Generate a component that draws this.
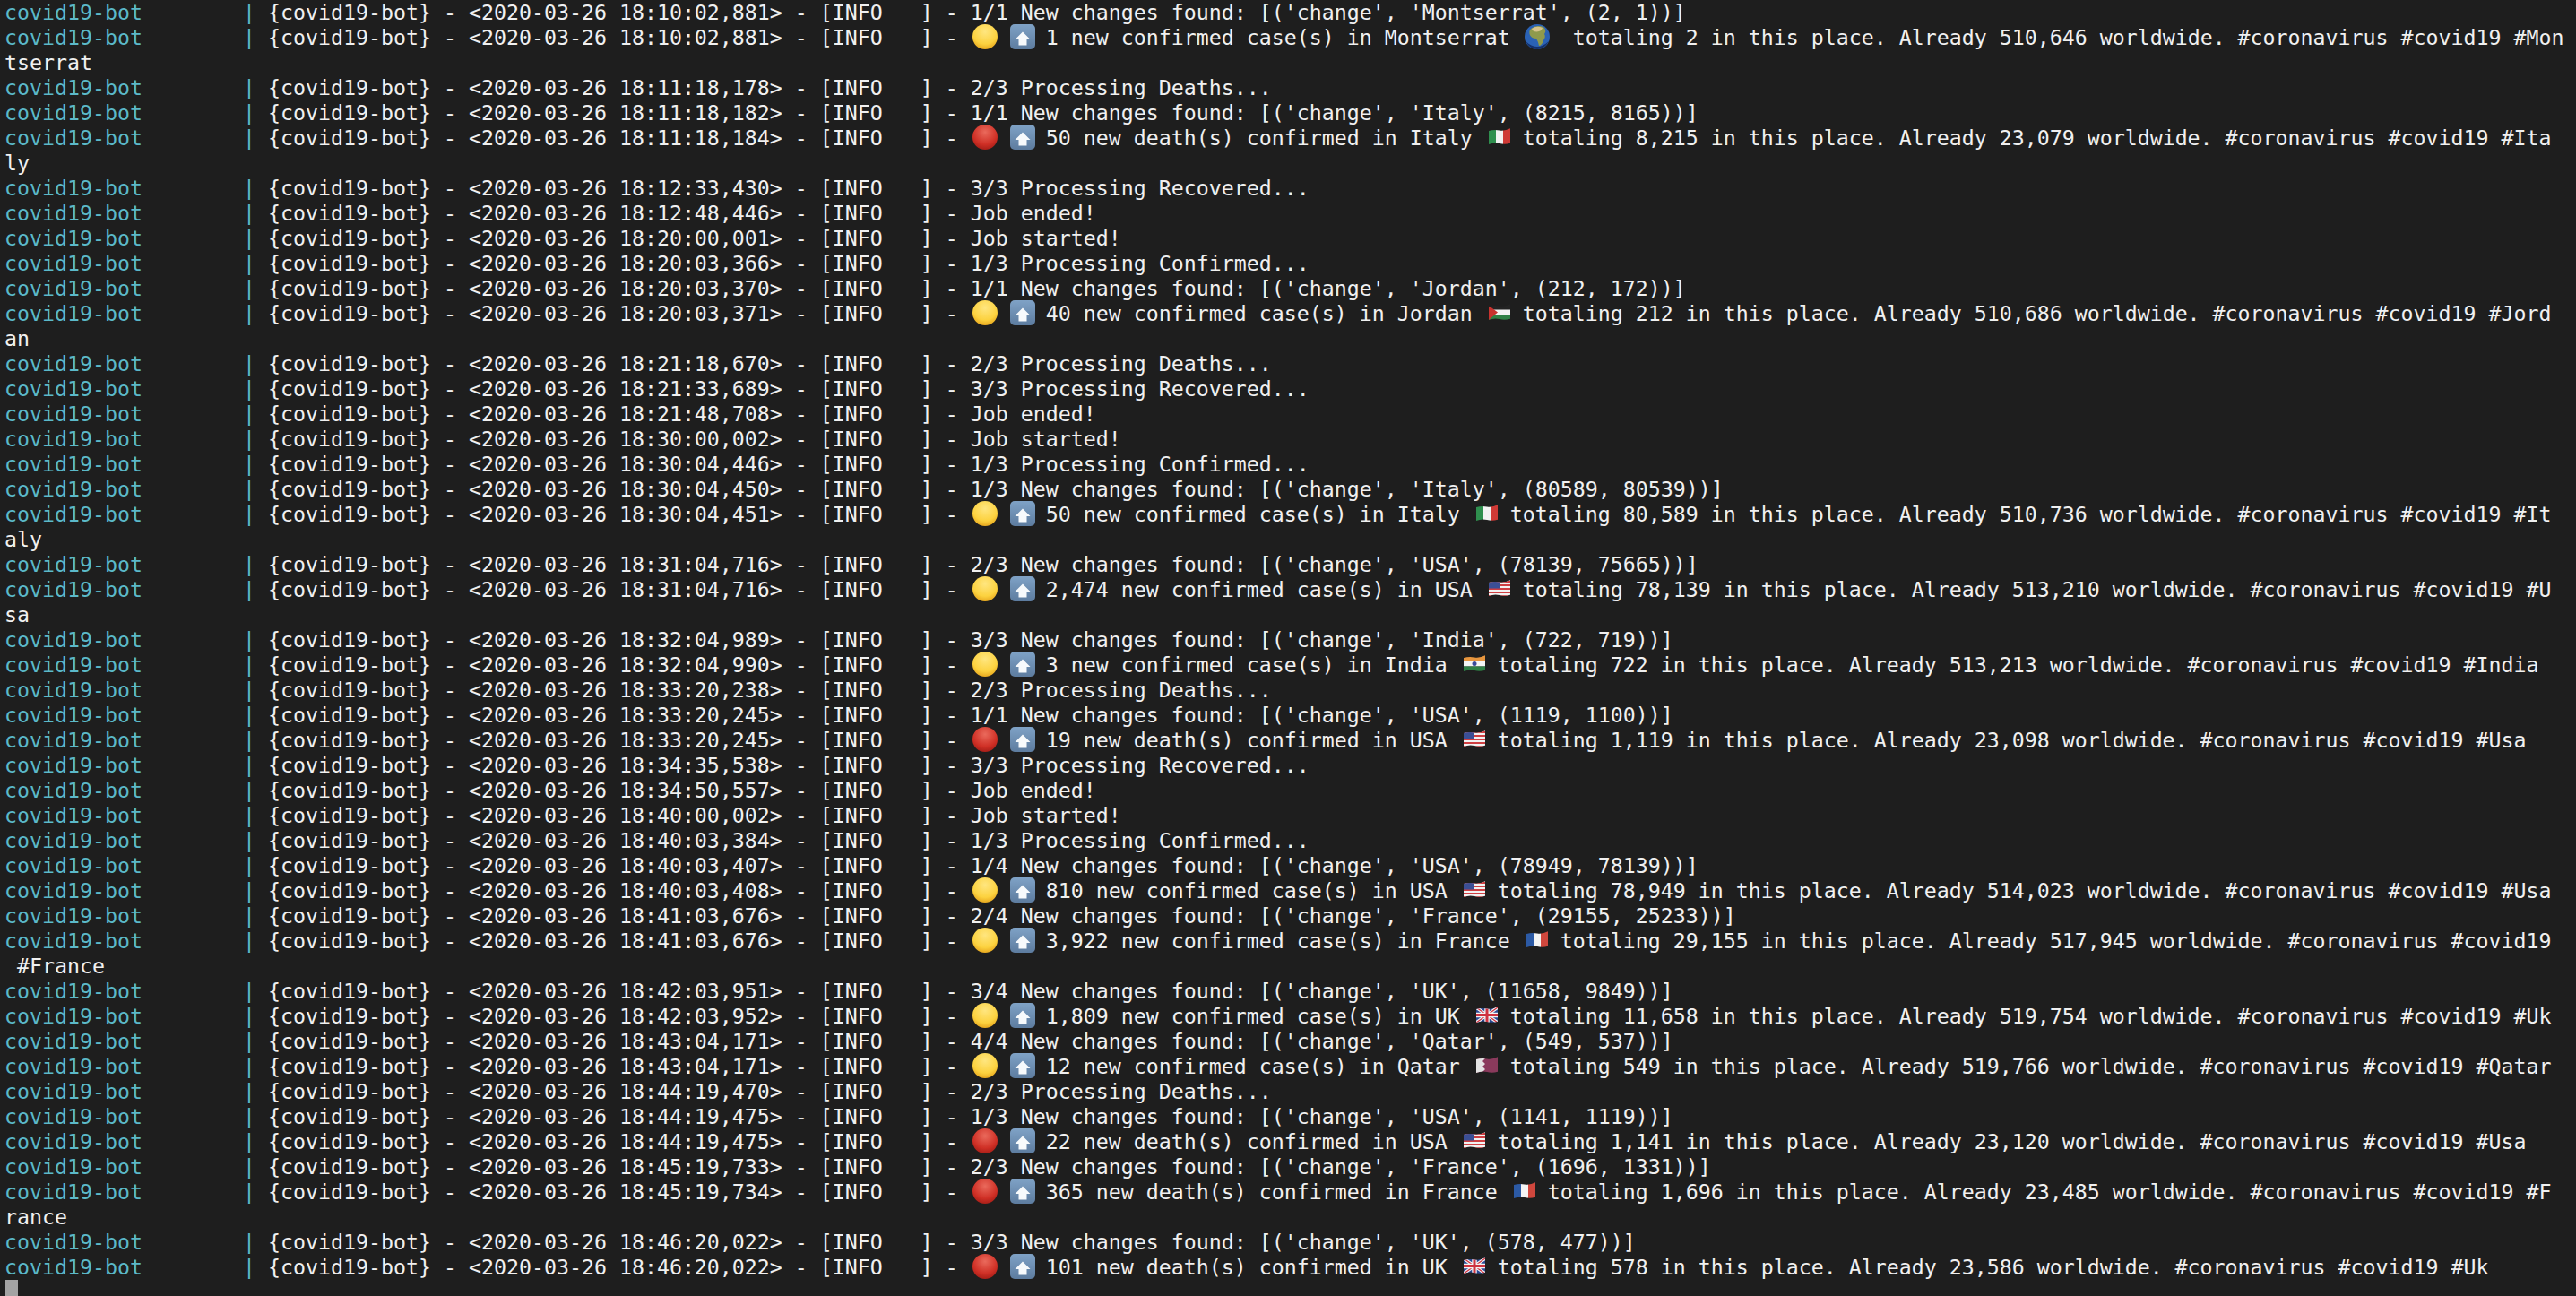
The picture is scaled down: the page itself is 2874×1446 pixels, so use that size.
import { useId } from "react";

const confirmed = (n: string, place: string, flag: string, total: string, world: string, tags: string) =>
  `🟡 ⬆️ ${n} new confirmed case(s) in ${place} ${flag} totaling ${total} in this place. Already ${world} worldwide. #coronavirus #covid19${tags}`;
const deaths = (n: string, place: string, flag: string, total: string, world: string, tags: string) =>
  `🔴 ⬆️ ${n} new death(s) confirmed in ${place} ${flag} totaling ${total} in this place. Already ${world} worldwide. #coronavirus #covid19${tags}`;
const found = (step: string, place: string, a: string) => `${step} New changes found: [('change', '${place}', ${a}]`;

// [time, message], or a plain string for the part of a line the terminal wrapped
const lines: ([string, string] | string)[] = [
  ["18:10:02,881", found("1/1", "Montserrat", "(2, 1))")],
  ["18:10:02,881", confirmed("1", "Montserrat", "🌍 ", "2", "510,646", " #Mon")],
  "tserrat",
  ["18:11:18,178", "2/3 Processing Deaths..."],
  ["18:11:18,182", found("1/1", "Italy", "(8215, 8165))")],
  ["18:11:18,184", deaths("50", "Italy", "🇮🇹", "8,215", "23,079", " #Ita")],
  "ly",
  ["18:12:33,430", "3/3 Processing Recovered..."],
  ["18:12:48,446", "Job ended!"],
  ["18:20:00,001", "Job started!"],
  ["18:20:03,366", "1/3 Processing Confirmed..."],
  ["18:20:03,370", found("1/1", "Jordan", "(212, 172))")],
  ["18:20:03,371", confirmed("40", "Jordan", "🇯🇴", "212", "510,686", " #Jord")],
  "an",
  ["18:21:18,670", "2/3 Processing Deaths..."],
  ["18:21:33,689", "3/3 Processing Recovered..."],
  ["18:21:48,708", "Job ended!"],
  ["18:30:00,002", "Job started!"],
  ["18:30:04,446", "1/3 Processing Confirmed..."],
  ["18:30:04,450", found("1/3", "Italy", "(80589, 80539))")],
  ["18:30:04,451", confirmed("50", "Italy", "🇮🇹", "80,589", "510,736", " #It")],
  "aly",
  ["18:31:04,716", found("2/3", "USA", "(78139, 75665))")],
  ["18:31:04,716", confirmed("2,474", "USA", "🇺🇸", "78,139", "513,210", " #U")],
  "sa",
  ["18:32:04,989", found("3/3", "India", "(722, 719))")],
  ["18:32:04,990", confirmed("3", "India", "🇮🇳", "722", "513,213", " #India")],
  ["18:33:20,238", "2/3 Processing Deaths..."],
  ["18:33:20,245", found("1/1", "USA", "(1119, 1100))")],
  ["18:33:20,245", deaths("19", "USA", "🇺🇸", "1,119", "23,098", " #Usa")],
  ["18:34:35,538", "3/3 Processing Recovered..."],
  ["18:34:50,557", "Job ended!"],
  ["18:40:00,002", "Job started!"],
  ["18:40:03,384", "1/3 Processing Confirmed..."],
  ["18:40:03,407", found("1/4", "USA", "(78949, 78139))")],
  ["18:40:03,408", confirmed("810", "USA", "🇺🇸", "78,949", "514,023", " #Usa")],
  ["18:41:03,676", found("2/4", "France", "(29155, 25233))")],
  ["18:41:03,676", confirmed("3,922", "France", "🇫🇷", "29,155", "517,945", "")],
  " #France",
  ["18:42:03,951", found("3/4", "UK", "(11658, 9849))")],
  ["18:42:03,952", confirmed("1,809", "UK", "🇬🇧", "11,658", "519,754", " #Uk")],
  ["18:43:04,171", found("4/4", "Qatar", "(549, 537))")],
  ["18:43:04,171", confirmed("12", "Qatar", "🇶🇦", "549", "519,766", " #Qatar")],
  ["18:44:19,470", "2/3 Processing Deaths..."],
  ["18:44:19,475", found("1/3", "USA", "(1141, 1119))")],
  ["18:44:19,475", deaths("22", "USA", "🇺🇸", "1,141", "23,120", " #Usa")],
  ["18:45:19,733", found("2/3", "France", "(1696, 1331))")],
  ["18:45:19,734", deaths("365", "France", "🇫🇷", "1,696", "23,485", " #F")],
  "rance",
  ["18:46:20,022", found("3/3", "UK", "(578, 477))")],
  ["18:46:20,022", deaths("101", "UK", "🇬🇧", "578", "23,586", " #Uk")],
];

const emojiPattern = /(🟡|🔴|⬆️|🌍|🇮🇹|🇯🇴|🇺🇸|🇮🇳|🇫🇷|🇬🇧|🇶🇦)/u;

// emoji are a little bigger than their two cells, so the drawings spill over the box
const svgClass = "h-[28px] w-[28px] overflow-visible";

function Ball({ light, mid, dark }: { light: string; mid: string; dark: string }) {
  const id = useId();
  return (
    <svg viewBox="0 0 28 28" className={svgClass}>
      <defs>
        <radialGradient id={id} cx="50%" cy="30%" r="70%">
          <stop offset="0%" stopColor={light} />
          <stop offset="70%" stopColor={mid} />
          <stop offset="100%" stopColor={dark} />
        </radialGradient>
      </defs>
      <circle cx="16" cy="13" r="14" fill={`url(#${id})`} />
    </svg>
  );
}

function UpArrow() {
  const id = useId();
  return (
    <svg viewBox="0 0 28 28" className={svgClass}>
      <defs>
        <linearGradient id={id} x1="0" y1="0" x2="0" y2="1">
          <stop offset="0%" stopColor="#7fa2c6" />
          <stop offset="100%" stopColor="#5d7c9f" />
        </linearGradient>
      </defs>
      <rect x="2" y="-1" width="28" height="28" rx="5" fill={`url(#${id})`} />
      <path d="M16 7.5 L24.5 16 H20.5 V22.5 H11.5 V16 H7.5 Z" fill="#f7fafc" />
    </svg>
  );
}

function Globe() {
  return (
    <svg viewBox="0 0 28 28" className={svgClass}>
      <circle cx="16" cy="13" r="14" fill="#2a62b5" />
      <path d="M9 4 Q15 -1 23 2 Q27 6 24 10 Q26 13 23 17 Q21 23 18 23 Q17 18 15 15 Q9 15 7.5 10 Q7 6 9 4 Z" fill="#8f9a4c" />
      <path d="M10 4 Q15 0 22 3 Q21 7 15.5 7.5 Q11 7.5 10 4 Z" fill="#d8c48c" />
      <path d="M3 18 Q16 30 29 18 Q24 27 16 27 Q8 27 3 18 Z" fill="#14306a" />
    </svg>
  );
}

function Flag({ code }: { code: string }) {
  const id = useId();
  let body = null;
  if (code === "🇮🇹") {
    body = (
      <>
        <rect x="4" y="0" width="8" height="28" fill="#2f8f4e" />
        <rect x="12" y="0" width="8" height="28" fill="#f2f2f2" />
        <rect x="20" y="0" width="8" height="28" fill="#cf3a36" />
      </>
    );
  } else if (code === "🇫🇷") {
    body = (
      <>
        <rect x="4" y="0" width="8" height="28" fill="#2c5aa5" />
        <rect x="12" y="0" width="8" height="28" fill="#f4f4f4" />
        <rect x="20" y="0" width="8" height="28" fill="#d0473d" />
      </>
    );
  } else if (code === "🇯🇴") {
    body = (
      <>
        <rect x="4" y="0" width="24" height="9.5" fill="#222222" />
        <rect x="4" y="9.5" width="24" height="6" fill="#f2f2f2" />
        <rect x="4" y="15.5" width="24" height="8" fill="#2f8045" />
        <path d="M4 5 L14 12.5 L4 21 Z" fill="#c8322e" />
      </>
    );
  } else if (code === "🇮🇳") {
    body = (
      <>
        <rect x="4" y="0" width="24" height="9.5" fill="#e8963e" />
        <rect x="4" y="9.5" width="24" height="6" fill="#f4f4f4" />
        <rect x="4" y="15.5" width="24" height="8" fill="#2f8045" />
        <circle cx="16" cy="12.5" r="2.5" fill="#3a4a9a" />
      </>
    );
  } else if (code === "🇶🇦") {
    body = (
      <>
        <rect x="4" y="0" width="24" height="28" fill="#8a3a5c" />
        <path d="M4 0 H11 L14 5 L11 8 L14 11 L11 14 L14 17 L11 20 L14 23 H4 Z" fill="#e4e4e4" />
      </>
    );
  } else if (code === "🇺🇸") {
    body = (
      <>
        <rect x="4" y="0" width="24" height="28" fill="#f2f2f2" />
        <path d="M4 5 H28 M4 9 H28 M4 13 H28 M4 17 H28 M4 21 H28" stroke="#cf3f42" strokeWidth="2" />
        <rect x="4" y="0" width="12" height="12.5" fill="#3b4f95" />
      </>
    );
  } else {
    body = (
      <>
        <rect x="4" y="0" width="24" height="28" fill="#2b4a94" />
        <path d="M4 4 L28 21 M28 4 L4 21" stroke="#f2f2f2" strokeWidth="3.5" />
        <path d="M4 4 L28 21 M28 4 L4 21" stroke="#cf3340" strokeWidth="1.3" />
        <path d="M16 0 V28 M4 12.5 H28" stroke="#f2f2f2" strokeWidth="5.5" />
        <path d="M16 0 V28 M4 12.5 H28" stroke="#cf3340" strokeWidth="3" />
      </>
    );
  }
  return (
    <svg viewBox="0 0 28 28" className={svgClass}>
      <defs>
        <clipPath id={id}>
          <path d="M4 6 Q10 4.5 16 5.5 T28 3.3 V19.7 Q22 21.5 16 20 T4 21 Z" />
        </clipPath>
      </defs>
      <g clipPath={`url(#${id})`}>{body}</g>
    </svg>
  );
}

function Emoji({ char }: { char: string }) {
  let icon;
  if (char === "🟡") icon = <Ball light="#ffe680" mid="#fcd23f" dark="#e8a91f" />;
  else if (char === "🔴") icon = <Ball light="#ea6a5c" mid="#cf2f25" dark="#a91f18" />;
  else if (char === "⬆️") icon = <UpArrow />;
  else if (char === "🌍") icon = <Globe />;
  else icon = <Flag code={char} />;
  return <span className="inline-block h-[28px] w-[28px] align-top">{icon}</span>;
}

function Message({ text }: { text: string }) {
  return (
    <>
      {text.split(emojiPattern).map((part, i) =>
        i % 2 === 1 ? <Emoji key={i} char={part} /> : <span key={i}>{part}</span>
      )}
    </>
  );
}

export default function App() {
  return (
    <div
      className="h-[1446px] w-[2874px] overflow-hidden bg-[#1e1e1e] pl-[5px] text-[23.25px] leading-[28px] whitespace-pre text-[#f0f0f0]"
      style={{ fontFamily: '"DejaVu Sans Mono", monospace' }}
    >
      {lines.map((line, i) =>
        typeof line === "string" ? (
          <div key={i} className="h-[28px]">{line}</div>
        ) : (
          <div key={i} className="h-[28px]">
            <span className="text-[#5bb9c9]">{"covid19-bot        | "}</span>
            <Message text={`{covid19-bot} - <2020-03-26 ${line[0]}> - [INFO   ] - ${line[1]}`} />
          </div>
        )
      )}
      <div className="ml-px h-[28px] w-[14px] bg-[#a3a3a3]" />
    </div>
  );
}
